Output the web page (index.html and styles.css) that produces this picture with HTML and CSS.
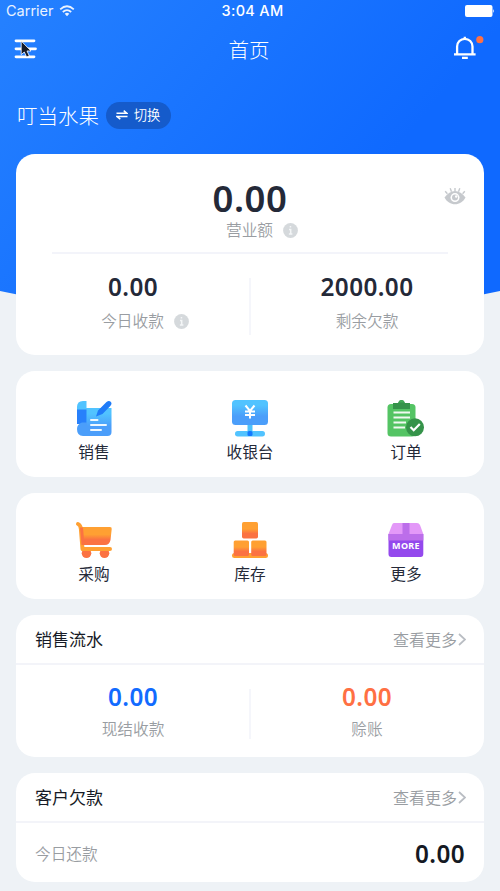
FILE: index.html
```html
<!DOCTYPE html>
<html lang="zh-CN">
<head>
<meta charset="utf-8">
<title>首页</title>
<link rel="stylesheet" href="styles.css">
</head>
<body>
<div class="app">
  <svg class="backdrop" width="500" height="310" viewBox="0 0 500 310">
    <defs><linearGradient id="sky" gradientUnits="userSpaceOnUse" x1="0" y1="0" x2="300" y2="260"><stop offset="0" stop-color="#2581ff"/><stop offset="1" stop-color="#0f69ff"/></linearGradient></defs>
    <path d="M0 0H500V291Q250 345 0 291Z" fill="url(#sky)"/>
  </svg>
  <div class="status">
    <span class="carrier">Carrier
      <svg width="16" height="12" viewBox="0 0 16 12"><g fill="none" stroke="#fff" stroke-width="1.8"><path d="M1.2 4.3Q8-1.7 14.8 4.3M3.8 7Q8 3.3 12.2 7"/></g><path d="M5.7 8.7Q8 6.9 10.3 8.7L8 11.2Z" fill="#fff"/></svg>
    </span>
    <span class="time">3:04 AM</span>
    <svg class="battery" width="30" height="12" viewBox="0 0 30 12"><rect width="27.5" height="12" rx="2" fill="#fff"/><path d="M28.2 4Q30 6 28.2 8Z" fill="#fff"/></svg>
  </div>
  <header class="nav">
    <svg class="menu" width="24" height="24" viewBox="0 0 24 24"><path d="M2 4.8H20M2 12.8H21.5M2 20.8H20" stroke="#fff" stroke-width="2.8" stroke-linecap="round"/><path d="M7.2 5V18.6L10.3 16 12.6 21 15.3 19.8 13 15H17Z" fill="#151b2b" stroke="#fff" stroke-width=".8"/></svg>
    <h1>首页</h1>
    <svg class="bell" width="32" height="26" viewBox="0 0 32 26"><path d="M5.1 19V11.5A7.7 7.7 0 0 1 20.5 11.5V19M2 19.3H23.6" fill="none" stroke="#fff" stroke-width="2.3"/><path d="M12.8 1.8V4M10 22.9H15.8" stroke="#fff" stroke-width="2.3"/><circle cx="27.8" cy="4.7" r="3.6" fill="#ff7043"/></svg>
  </header>
  <div class="shop">
    <span class="shop-name">叮当水果</span>
    <span class="switch"><svg width="12" height="10" viewBox="0 0 12 10"><path d="M.5 3.3H11L7.7.7M11.5 6.5H1L4.3 9.2" fill="none" stroke="#fff" stroke-width="1.5"/></svg>切换</span>
  </div>
  <main>
    <section class="card summary">
      <svg class="eye" width="22" height="18" viewBox="0 0 22 18"><path d="M.5 10.5C6.5 1.8 15.500 1.800 21.500 10.500C17 19.500 5 19.500 .5 10.500Z" fill="#c6c9cd"/><path d="M3.400 6.800 1.200 4.200M7.500 4.800 6.200 1.300M14.500 4.800 15.800 1.300M18.600 6.800 20.800 4.200M11 4V1" stroke="#c6c9cd" stroke-width="1.400"/><circle cx="11" cy="10.600" r="4.500" fill="#fff"/><circle cx="11" cy="10.600" r="3" fill="#c6c9cd"/><circle cx="12.200" cy="9.500" r="1.200" fill="#fff"/></svg>
      <div class="revenue">
        <div class="total">0.00</div>
        <div class="label">营业额<svg class="info" width="15" height="15" viewBox="0 0 15 15"><circle cx="7.5" cy="7.5" r="7.4" fill="#d5d9dc"/><path d="M6 6.5H7.7V11M5.9 11H9.4M6.7 3.8H8.2" fill="none" stroke="#f4f6f7" stroke-width="1.5"/></svg></div>
      </div>
      <div class="pair">
        <div class="stat"><div class="value">0.00</div><div class="label">今日收款<svg class="info" width="15" height="15" viewBox="0 0 15 15"><circle cx="7.5" cy="7.5" r="7.4" fill="#d5d9dc"/><path d="M6 6.5H7.7V11M5.9 11H9.4M6.7 3.8H8.2" fill="none" stroke="#f4f6f7" stroke-width="1.5"/></svg></div></div>
        <div class="stat"><div class="value">2000.00</div><div class="label">剩余欠款</div></div>
      </div>
    </section>

    <section class="card tools">
      <div class="tool">
        <svg width="40" height="40" viewBox="0 0 40 40"><defs><linearGradient id="blue" x2="0" y2="1"><stop offset=".2" stop-color="#51c3ff"/><stop offset=".65" stop-color="#4b9efa"/></linearGradient></defs><path d="M9 9H37.500V33Q37.500 37 33.500 37H9Z" fill="url(#blue)"/><path d="M12.500 2V24H3V8Q3 2 9 2Z" fill="#51c3ff"/><path d="M3 10.500H12.500V25H3Z" fill="#2780fb"/><path d="M8 23.500H13V37H9Q3 37 3 30Q3 25 8 23.500Z" fill="#4b9efa"/><path d="M24 11.500 32.500 3Q35 1 36.700 2.800Q38.500 4.800 36.300 7L28.500 15 22 17.500Z" fill="#1f7bf8"/><path d="M17 21H23.500M17 26H32M17 31H27" stroke="#eef8ff" stroke-width="2" stroke-linecap="round"/></svg>
        <span>销售</span>
      </div>
      <div class="tool">
        <svg width="40" height="40" viewBox="0 0 40 40"><rect x="17.5" y="24" width="5" height="11" fill="#4dc2fc"/><rect x="2" y="1" width="36" height="25" rx="3.5" fill="url(#blue)"/><rect x="5" y="32" width="30" height="5.5" rx="2.7" fill="#51c3ff"/><rect x="17.5" y="32" width="5" height="5" rx="1.5" fill="#1479ff"/><path d="M15.5 6.5 20 12 24.5 6.5M20 12V19.5M15 12.5H25M15 16H25" fill="none" stroke="#fff" stroke-width="2"/></svg>
        <span>收银台</span>
      </div>
      <div class="tool">
        <svg width="40" height="40" viewBox="0 0 40 40"><rect x="1.5" y="5" width="28" height="32.5" rx="3.500" fill="#54c464"/><path d="M7 10V4H12Q13 1 15.500 1T19 4H24V10Z" fill="#35934a"/><path d="M12.500 3.500Q13 1 15.500 1T18.500 3.500Z" fill="#43ab57"/><path d="M7.500 13.500H24M7.500 18.500H24M7.500 23.500H20M7.500 28.500H19" stroke="#f0f9f2" stroke-width="1.900"/><circle cx="29" cy="28.300" r="9" fill="#35934a"/><path d="M24.500 28 27.700 31.200 33.800 25" fill="none" stroke="#fff" stroke-width="2.200"/></svg>
        <span>订单</span>
      </div>
    </section>

    <section class="card tools second">
      <div class="tool">
        <svg width="40" height="40" viewBox="0 0 40 40"><defs><linearGradient id="orange" x2="0" y2="1"><stop offset=".42" stop-color="#ffa032"/><stop offset=".7" stop-color="#fb7242"/></linearGradient></defs><path d="M6 7H36Q38 7 37.700 9L36.500 20Q35.500 25 31 25H8Z" fill="url(#orange)"/><circle cx="12.500" cy="33.300" r="4.800" fill="#fb7242"/><circle cx="30.500" cy="33.300" r="4.800" fill="#fb7242"/><path d="M4 4Q6.500 5 6.900 9L8.500 29H36" fill="none" stroke="#ffa032" stroke-width="4" stroke-linecap="round" stroke-linejoin="round"/><path d="M6 7.500H9L10.500 25H7.500Z" fill="#fb7242"/></svg>
        <span>采购</span>
      </div>
      <div class="tool">
        <svg width="40" height="40" viewBox="0 0 40 40"><rect x="12" y="2" width="16" height="16.5" rx="1.7" fill="url(#orange)"/><rect x="2" y="33" width="36" height="5" rx="2.5" fill="#ffa032"/><rect x="3.700" y="20.500" width="15.300" height="15.500" rx="1.500" fill="url(#orange)"/><rect x="21.200" y="20.500" width="15.300" height="15.500" rx="1.500" fill="url(#orange)"/></svg>
        <span>库存</span>
      </div>
      <div class="tool">
        <svg width="40" height="40" viewBox="0 0 40 40"><path d="M8 3H31Q33 3 34 5L37.300 14H2.500L6 5Q6.600 3 8 3Z" fill="#e398f8"/><path d="M2.500 14H37.300V34Q37.300 37 34.500 37H5.300Q2.500 37 2.500 34Z" fill="#9449ed"/><path d="M2.500 14H37.300V20.500H2.500ZM16.500 3H23.500V14.500H16.500Z" fill="#bc6eea"/><text x="20" y="28.500" class="more-text">MORE</text></svg>
        <span>更多</span>
      </div>
    </section>

    <section class="card sales">
      <div class="card-head"><h2>销售流水</h2><a>查看更多<svg width="8" height="13" viewBox="0 0 8 13"><path d="M1 1 7 6.5 1 12" fill="none" stroke="#b9bdc3" stroke-width="1.7"/></svg></a></div>
      <div class="pair">
        <div class="stat"><div class="value blue">0.00</div><div class="label">现结收款</div></div>
        <div class="stat"><div class="value orange">0.00</div><div class="label">赊账</div></div>
      </div>
    </section>

    <section class="card debt">
      <div class="card-head"><h2>客户欠款</h2><a>查看更多<svg width="8" height="13" viewBox="0 0 8 13"><path d="M1 1 7 6.5 1 12" fill="none" stroke="#b9bdc3" stroke-width="1.7"/></svg></a></div>
      <div class="debt-row"><span class="label">今日还款</span><span class="value">0.00</span></div>
    </section>
  </main>
</div>
</body>
</html>
```
FILE: styles.css
```css
* { box-sizing: border-box; }
body { margin: 0; background: #eef2f6; font-family: "Noto Sans CJK SC", sans-serif; color: #242938; }
h1, h2 { margin: 0; font-weight: 400; }
svg { display: block; flex: none; }
.app { position: relative; width: 500px; height: 891px; overflow: hidden; }
.backdrop { position: absolute; left: 0; top: 0; z-index: -1; }
.status { display: grid; grid-template-columns: 1fr auto 1fr; align-items: center; height: 22px; padding: 0 5px 0 6px; color: #fff; font: 14.5px/22px Inter, sans-serif; }
.carrier { display: flex; align-items: center; gap: 5px; opacity: .9; }
.time { font-weight: 500; letter-spacing: .3px; padding-left: 4px; }
.battery { justify-self: end; }
.nav { display: grid; grid-template-columns: 1fr auto 1fr; align-items: center; height: 54px; padding: 0 16px 2px 14px; color: #fff; }
.nav h1 { font-size: 20.5px; line-height: 30px; font-weight: 300; padding-top: 2px; }
.bell { justify-self: end; }
.shop { display: flex; align-items: center; height: 78px; padding: 0 17px; gap: 7px; color: #fff; }
.shop-name { font-size: 20.5px; font-weight: 300; line-height: 30px; padding-bottom: 1px; }
.switch { display: flex; align-items: center; justify-content: center; gap: 6px; width: 65px; height: 27px; padding-right: 1px; border-radius: 14px; background: #155bcb; font-size: 13.3px; line-height: 20px; font-weight: 350; }
main { display: flex; flex-direction: column; gap: 16px; padding: 0 16px; }
.card { background: #fff; border-radius: 19px; }
.summary { position: relative; height: 201px; }
.eye { position: absolute; right: 18px; top: 33px; }
.revenue { margin: 0 36px; height: 100px; padding-top: 24px; border-bottom: 2px solid #f3f4fa; display: flex; flex-direction: column; align-items: center; gap: 1px; }
.total { font: 600 36.5px/40px "Noto Sans", sans-serif; letter-spacing: .6px; }
.label { display: flex; align-items: center; justify-content: center; gap: 10px; font-size: 15.7px; line-height: 22px; color: #999da2; font-weight: 350; }
.value { font: 600 24.3px/32px "Noto Sans", sans-serif; letter-spacing: .4px; }
.pair { display: flex; position: relative; }
.pair::after { content: ""; position: absolute; left: 233px; top: 24px; width: 2px; height: 57px; background: #f5f6fb; }
.stat { flex: 1; padding-top: 17px; text-align: center; }
.summary .stat .label { margin-top: 7px; }
.summary .stat:first-child .label { padding-left: 24px; }
.summary .revenue .label { padding-left: 24px; }
.tools { display: grid; grid-template-columns: repeat(3, 1fr); height: 106px; padding-top: 28px; }
.second { padding-top: 27px; }
.tool { display: flex; flex-direction: column; align-items: center; gap: 2px; font-size: 15.7px; line-height: 22px; }
.second .tool { gap: 3px; }
.more-text { font: 700 9px "Noto Sans", sans-serif; letter-spacing: .3px; fill: #fff; text-anchor: middle; }
.sales { height: 142px; }
.sales .stat { padding-top: 16px; }
.sales .stat .label { margin-top: 5px; }
.sales .pair::after { height: 50px; }
.card-head { display: flex; align-items: center; justify-content: space-between; height: 50px; padding: 0 18px 0 19px; border-bottom: 2px solid #f3f4f9; }
.card-head h2 { font-size: 17px; line-height: 24px; color: #171b26; }
.card-head a { display: flex; align-items: center; gap: 1px; font-size: 16px; line-height: 22px; font-weight: 350; color: #999da2; }
.blue { color: #126bff; }
.orange { color: #ff7043; }
.debt { height: 109px; }
.debt-row { display: flex; align-items: center; justify-content: space-between; height: 61px; padding: 1px 19px 0 19px; }
.debt .value { color: #151923; }
```
